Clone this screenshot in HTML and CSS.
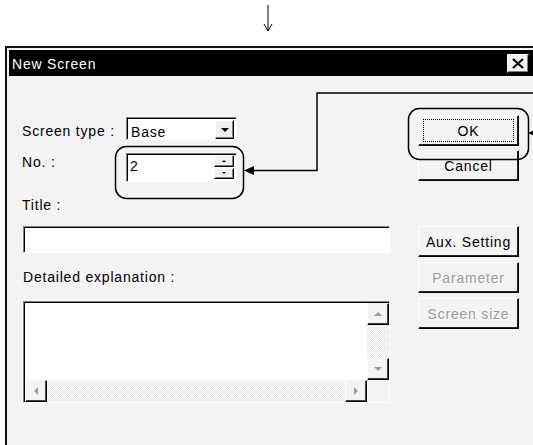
FILE: index.html
```html
<!doctype html>
<html lang="en">
<head>
	<meta charset="UTF-8" />
	<title>New Screen</title>
	<link rel="stylesheet" href="styles.css">
</head>
<body>
<div class="page">
	<div class="window">
		<div class="titlebar">
			<span class="caption">New Screen</span>
			<div class="close">
				<svg width="12" height="11" viewBox="0 0 12 11"><path d="M1 1 L11 10 M11 1 L1 10" stroke="#000" stroke-width="2.2" fill="none"/></svg>
			</div>
		</div>
		<div class="client">
			<div class="form">
				<div class="row">
					<span class="label combo-label">Screen type :</span>
					<div class="combo">
						<span class="value">Base</span>
						<div class="drop"><i class="tri-down"></i></div>
					</div>
				</div>
				<div class="row row-no">
					<span class="label no-label">No. :</span>
					<div class="spin">
						<span class="value">2</span>
						<div class="spin-btns">
							<div class="spin-btn"><i class="tri-up small"></i></div>
							<div class="spin-btn"><i class="tri-down small"></i></div>
						</div>
					</div>
				</div>
				<div class="label title-label">Title :</div>
				<div class="edit"></div>
				<div class="label expl-label">Detailed explanation :</div>
				<div class="memo">
					<div class="memo-text"></div>
					<div class="vbar">
						<div class="sb-btn"><i class="tri-up grey"></i></div>
						<div class="track"></div>
						<div class="sb-btn"><i class="tri-down grey"></i></div>
					</div>
					<div class="hbar">
						<div class="sb-btn"><i class="tri-left grey"></i></div>
						<div class="track"></div>
						<div class="sb-btn"><i class="tri-right grey"></i></div>
					</div>
					<div class="corner"></div>
				</div>
			</div>
			<div class="buttons">
				<div class="btn default"><span class="focus">OK</span></div>
				<div class="btn cancel">Cancel</div>
				<div class="btn aux">Aux. Setting</div>
				<div class="btn disabled param">Parameter</div>
				<div class="btn disabled">Screen size</div>
			</div>
		</div>
	</div>

	<svg class="notes" width="533" height="445" viewBox="0 0 533 445">
		<path d="M268 5 V31 M264 24 L268 31 L272 24" stroke="#000" stroke-width="1" fill="none"/>
		<rect x="115.5" y="146.5" width="128" height="52" rx="11" stroke="#000" stroke-width="1.5" fill="none"/>
		<rect x="408.5" y="108.5" width="120" height="51" rx="11" stroke="#000" stroke-width="1.5" fill="none"/>
		<path d="M540 93 H317 V170.5 H252" stroke="#000" stroke-width="1.5" fill="none"/>
		<path d="M244 170.5 L254 166 L254 175 Z" fill="#000"/>
		<path d="M528 133 L538 128.5 L538 137.5 Z" fill="#000"/>
	</svg>
</div>
</body>
</html>
```

FILE: styles.css
```css
body{margin:0;background:#fff;font-family:"Liberation Sans",Arial,sans-serif;font-size:14px;letter-spacing:0.8px;color:#000;}
.page{position:relative;width:533px;height:445px;overflow:hidden;}

.window{margin:46px 0 0 5px;width:528px;height:399px;box-sizing:border-box;border-top:2px solid #111;border-left:2px solid #111;background:#f3f3f3;}
.titlebar{margin:2px 0 0 2px;height:26px;background:#000;color:#fff;display:flex;align-items:center;justify-content:space-between;padding:1px 4px 0 3px;box-sizing:border-box;}
.caption{line-height:16px;}
.close{width:22px;height:19px;box-sizing:border-box;background:#f0f0f0;border:1px solid;border-color:#fff #000 #000 #fff;box-shadow:inset -1px -1px #808080;display:flex;align-items:center;justify-content:center;}
.close svg{display:block;}

.client{display:flex;padding:39px 0 0 15px;}
.form{width:368px;margin-top:2px;}
.row{display:flex;align-items:flex-start;}
.label{line-height:16px;white-space:nowrap;}
.row .label{width:104px;}
.combo-label{padding-top:6px;}
.no-label{padding-top:1px;}
.row-no{margin-top:13px;}
.title-label{margin-top:15px;}
.expl-label{margin-top:16px;margin-left:1px;}

/* sunken fields */
.combo,.spin,.edit,.memo{background:#fff;box-sizing:border-box;border:1px solid;border-color:#808080 #fff #fff #808080;box-shadow:inset 1px 1px #000;}
.combo{width:111px;height:23px;display:flex;justify-content:space-between;padding:1px 2px 1px 1px;}
.combo .value{line-height:16px;margin:5px 0 0 3px;}
.drop{width:19px;height:19px;margin-top:1px;box-sizing:border-box;background:#f0f0f0;border:1px solid;border-color:#fff #000 #000 #fff;box-shadow:inset -1px -1px #808080;display:flex;align-items:center;justify-content:center;}
.spin{width:111px;height:29px;display:flex;justify-content:space-between;padding:1px 2px 1px 1px;}
.spin .value{line-height:16px;margin:3px 0 0 2px;}
.spin-btns{display:flex;flex-direction:column;width:20px;margin-top:0;}
.spin-btn{height:13px;margin-bottom:1px;box-sizing:border-box;background:#f0f0f0;border:1px solid;border-color:#fff #000 #000 #fff;box-shadow:inset -1px -1px #808080;display:flex;align-items:center;justify-content:center;}
.edit{width:367px;height:27px;margin-top:13px;margin-left:1px;}
.memo{width:367px;height:102px;margin-top:16px;margin-left:1px;display:grid;grid-template-columns:1fr 22px;grid-template-rows:1fr 22px;padding:1px 0 0 1px;}
.vbar{display:flex;flex-direction:column;}
.hbar{display:flex;}
.track{flex:1;background:repeating-conic-gradient(#e4e4e4 0 25%,#fff 0 50%) 0 0/2px 2px;}
.corner{background:#f3f3f3;}
.sb-btn{width:22px;height:22px;box-sizing:border-box;background:#f3f3f3;border:1px solid;border-color:#f3f3f3 #000 #000 #fff;box-shadow:inset -1px -1px #404040;display:flex;align-items:center;justify-content:center;}

/* triangles */
.tri-down,.tri-up,.tri-left,.tri-right{display:block;width:0;height:0;}
.tri-down{border-left:4px solid transparent;border-right:4px solid transparent;border-top:4px solid #000;}
.tri-up{border-left:4px solid transparent;border-right:4px solid transparent;border-bottom:4px solid #000;}
.tri-left{border-top:4px solid transparent;border-bottom:4px solid transparent;border-right:4px solid #000;}
.tri-right{border-top:4px solid transparent;border-bottom:4px solid transparent;border-left:4px solid #000;}
.tri-down.small{border-width:2px 2px 0;}
.tri-up.small{border-width:0 2px 2px;}
.grey.tri-up{border-bottom-color:#9a9a9a;}
.grey.tri-down{border-top-color:#9a9a9a;}
.grey.tri-left{border-right-color:#9a9a9a;}
.grey.tri-right{border-left-color:#9a9a9a;}

/* push buttons */
.buttons{margin-left:28px;width:101px;display:flex;flex-direction:column;}
.btn{height:31px;box-sizing:border-box;background:#f3f3f3;border:1px solid;border-color:#fff #000 #000 #fff;box-shadow:inset -1px -1px #202020;display:flex;align-items:center;justify-content:center;line-height:16px;white-space:nowrap;}
.btn.default{padding:3px 4px;}
.focus{flex:1;align-self:stretch;display:flex;align-items:center;justify-content:center;border:1px dotted #000;}
.cancel{margin-top:4px;}
.aux{margin-top:45px;}
.btn.disabled{margin-top:5px;color:#9a9a9a;text-shadow:1px 1px #fff;}

.notes{position:absolute;left:0;top:0;pointer-events:none;}
```
